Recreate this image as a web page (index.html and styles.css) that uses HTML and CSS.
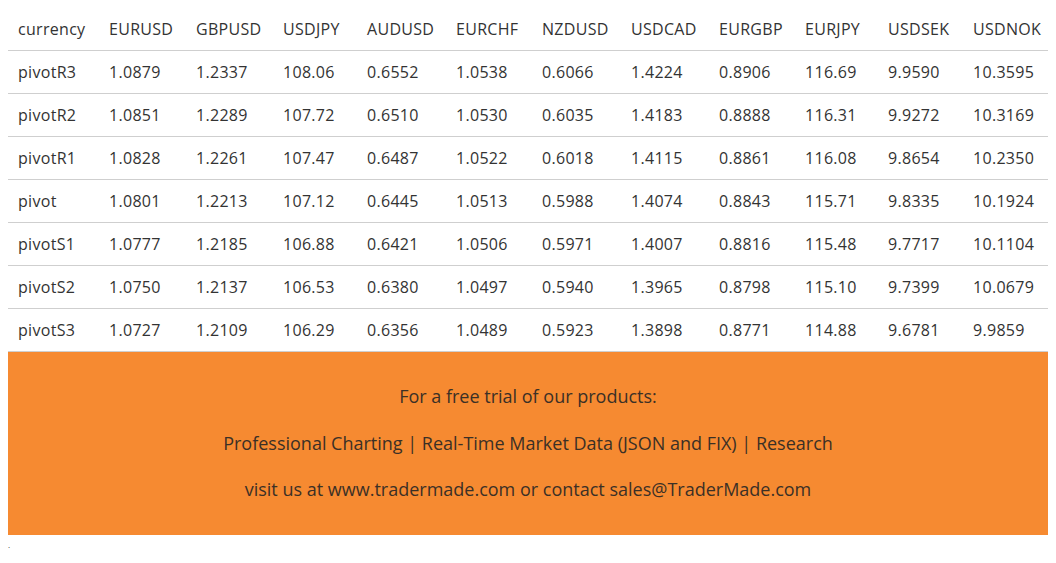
FILE: index.html
```html
<!DOCTYPE html>
<html>
<head>
<meta charset="utf-8">
<link rel="stylesheet" href="styles.css">
</head>
<body>
<table class="pivots">
  <colgroup>
    <col class="c1"><col class="c2"><col class="c3"><col class="c4"><col class="c5"><col class="c6"><col class="c7"><col class="c8"><col class="c9"><col class="c10"><col class="c11"><col class="c12">
  </colgroup>
  <thead>
    <tr><th>currency</th><th>EURUSD</th><th>GBPUSD</th><th>USDJPY</th><th>AUDUSD</th><th>EURCHF</th><th>NZDUSD</th><th>USDCAD</th><th>EURGBP</th><th>EURJPY</th><th>USDSEK</th><th>USDNOK</th></tr>
  </thead>
  <tbody>
    <tr><td>pivotR3</td><td>1.0879</td><td>1.2337</td><td>108.06</td><td>0.6552</td><td>1.0538</td><td>0.6066</td><td>1.4224</td><td>0.8906</td><td>116.69</td><td>9.9590</td><td>10.3595</td></tr>
    <tr><td>pivotR2</td><td>1.0851</td><td>1.2289</td><td>107.72</td><td>0.6510</td><td>1.0530</td><td>0.6035</td><td>1.4183</td><td>0.8888</td><td>116.31</td><td>9.9272</td><td>10.3169</td></tr>
    <tr><td>pivotR1</td><td>1.0828</td><td>1.2261</td><td>107.47</td><td>0.6487</td><td>1.0522</td><td>0.6018</td><td>1.4115</td><td>0.8861</td><td>116.08</td><td>9.8654</td><td>10.2350</td></tr>
    <tr><td>pivot</td><td>1.0801</td><td>1.2213</td><td>107.12</td><td>0.6445</td><td>1.0513</td><td>0.5988</td><td>1.4074</td><td>0.8843</td><td>115.71</td><td>9.8335</td><td>10.1924</td></tr>
    <tr><td>pivotS1</td><td>1.0777</td><td>1.2185</td><td>106.88</td><td>0.6421</td><td>1.0506</td><td>0.5971</td><td>1.4007</td><td>0.8816</td><td>115.48</td><td>9.7717</td><td>10.1104</td></tr>
    <tr><td>pivotS2</td><td>1.0750</td><td>1.2137</td><td>106.53</td><td>0.6380</td><td>1.0497</td><td>0.5940</td><td>1.3965</td><td>0.8798</td><td>115.10</td><td>9.7399</td><td>10.0679</td></tr>
    <tr><td>pivotS3</td><td>1.0727</td><td>1.2109</td><td>106.29</td><td>0.6356</td><td>1.0489</td><td>0.5923</td><td>1.3898</td><td>0.8771</td><td>114.88</td><td>9.6781</td><td>9.9859</td></tr>
  </tbody>
</table>
<div class="promo">
  <p>For a free trial of our products:</p>
  <p>Professional Charting | Real-Time Market Data (JSON and FIX) | Research</p>
  <p>visit us at www.tradermade.com or contact sales@TraderMade.com</p>
</div>
<p class="dot">.</p>
</body>
</html>
```

FILE: styles.css
```css
body {
  margin: 8px;
  font-family: "Open Sans", Lato, sans-serif;
  color: #333;
  background: #fff;
}
.pivots {
  border-collapse: collapse;
  table-layout: fixed;
  width: 1044px;
  font-size: 16px;
  letter-spacing: 0.3px;
}
.c1 { width: 91px; }
.c2 { width: 87px; }
.c3 { width: 87px; }
.c4 { width: 84px; }
.c5 { width: 89px; }
.c6 { width: 86px; }
.c7 { width: 89px; }
.c8 { width: 88px; }
.c9 { width: 86px; }
.c10 { width: 83px; }
.c11 { width: 85px; }
.c12 { width: 89px; }
.pivots th,
.pivots td {
  text-align: left;
  font-weight: normal;
  padding: 12px 10px;
  line-height: 18px;
  border-bottom: 1px solid #cfcfcf;
  white-space: nowrap;
  overflow: visible;
}
.promo {
  background: #f68a31;
  height: 183px;
  box-sizing: border-box;
  padding: 30px 0 0;
  text-align: center;
  font-size: 18px;
  color: #3b3026;
}
.promo p {
  margin: 0 0 18.5px;
  line-height: 28px;
}
.dot {
  margin: 4px 0 0;
  font-size: 8px;
  line-height: 12px;
}
```
